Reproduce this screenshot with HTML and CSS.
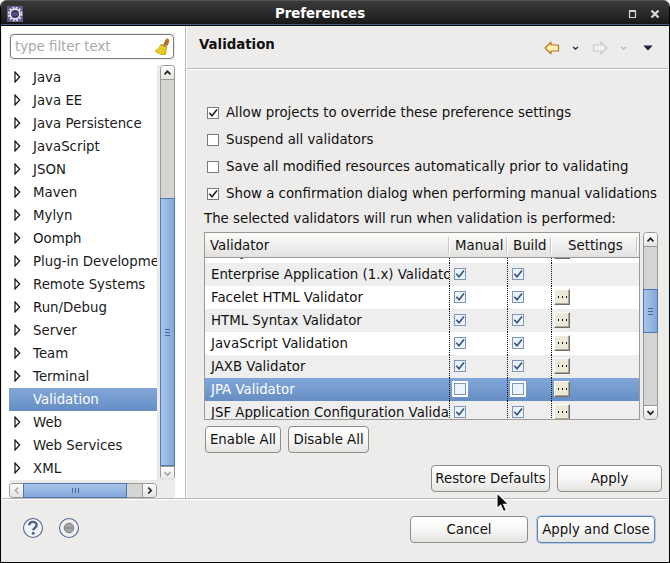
FILE: index.html
```html
<!DOCTYPE html>
<html lang="en">
<head>
<meta charset="utf-8">
<title>Preferences</title>
<link rel="stylesheet" href="styles.css">
</head>
<body>
<svg class="defs" width="0" height="0">
  <symbol id="up" viewBox="0 0 13 13"><path d="M3.5 8.3 6.5 5.3l3 3" fill="none" stroke="currentColor" stroke-width="1.7"/></symbol>
  <symbol id="down" viewBox="0 0 13 13"><path d="M3.5 5.2 6.5 8.2l3-3" fill="none" stroke="currentColor" stroke-width="1.7"/></symbol>
  <symbol id="left" viewBox="0 0 13 13"><path d="M8.3 3.5 5.3 6.5l3 3" fill="none" stroke="currentColor" stroke-width="1.7"/></symbol>
  <symbol id="right" viewBox="0 0 13 13"><path d="M5.2 3.5l3 3-3 3" fill="none" stroke="currentColor" stroke-width="1.7"/></symbol>
  <symbol id="tri" viewBox="0 0 7 12"><path d="M1 1v10L5.7 6z" fill="#fff" stroke="#111" stroke-width="1.2"/></symbol>
  <symbol id="check" viewBox="0 0 10 10"><path d="M1.300 4.800 4 7.800 9 1.600" fill="none" stroke="currentColor" stroke-width="1.600"/></symbol>
  <symbol id="arrow" viewBox="0 0 16 14"><path d="M1 7 7 1.2V4h7.5v6H7v2.8z" stroke-width="1.2" stroke-linejoin="round"/></symbol>
</svg>
<div class="window">
  <header class="titlebar">
    <svg class="logo" width="16" height="16" viewBox="0 0 16 16"><rect width="16" height="16" fill="#66558f"/><circle cx="8" cy="8" r="6.500" fill="none" stroke="#e8e6ea" stroke-width="1.800" stroke-dasharray="1.9 1.500"/><circle cx="8" cy="8" r="4.900" fill="#3b3263" stroke="#e8e6ea" stroke-width="1.600"/><path d="M4.500 7.200h7M4.500 9h7" stroke="#6a64a0"/></svg>
    <h1>Preferences</h1>
    <svg class="winbtns" width="32" height="10" viewBox="0 0 32 10"><path d="M1.500 2.500h6v6h-6z" fill="none" stroke="#d2d2d2" stroke-width="1.200"/><path d="M1 2h7" stroke="#d2d2d2" stroke-width="2"/><path d="M23.500 1.500l7 7M30.500 1.500l-7 7" stroke="#d8d8d8" stroke-width="2.300"/></svg>
  </header>
  <div class="main">
    <aside class="side">
      <div class="filterwrap"><div class="filter"><span>type filter text</span>
        <svg width="16" height="18" viewBox="0 0 16 18"><path d="M9.500 7 12 1.500q2-1.500 2.800.5T12.500 8z" fill="#c88728" stroke="#9a5a12" stroke-width=".7"/><path d="M12 3l2 1M11 5l2 1" stroke="#704010" stroke-width=".8"/><path d="M7 6.500 12.500 9.500 11.500 16.500Q6 17.500 1 13 5 11.500 7 6.500z" fill="#f0d82c" stroke="#b7950c" stroke-width=".8"/><path d="M8 9 4 14M9.500 10 7 15.500M11 10.500 10 16" stroke="#c9ac18" stroke-width=".8"/><path d="m7 6.500 5.500 3" stroke="#c77a20" stroke-width="1"/></svg>
      </div></div>
      <div class="treegrid">
        <ul class="tree">
          <li><svg><use href="#tri"/></svg>Java</li>
          <li><svg><use href="#tri"/></svg>Java EE</li>
          <li><svg><use href="#tri"/></svg>Java Persistence</li>
          <li><svg><use href="#tri"/></svg>JavaScript</li>
          <li><svg><use href="#tri"/></svg>JSON</li>
          <li><svg><use href="#tri"/></svg>Maven</li>
          <li><svg><use href="#tri"/></svg>Mylyn</li>
          <li><svg><use href="#tri"/></svg>Oomph</li>
          <li><svg><use href="#tri"/></svg>Plug-in Development</li>
          <li><svg><use href="#tri"/></svg>Remote Systems</li>
          <li><svg><use href="#tri"/></svg>Run/Debug</li>
          <li><svg><use href="#tri"/></svg>Server</li>
          <li><svg><use href="#tri"/></svg>Team</li>
          <li><svg><use href="#tri"/></svg>Terminal</li>
          <li class="selected"><svg></svg>Validation</li>
          <li><svg><use href="#tri"/></svg>Web</li>
          <li><svg><use href="#tri"/></svg>Web Services</li>
          <li><svg><use href="#tri"/></svg>XML</li>
        </ul>
        <div class="vbar tree-vbar"><span class="cap top"><svg><use href="#up"/></svg></span><span class="thumb"><i class="grip"></i></span><span class="cap bottom dim"><svg><use href="#down"/></svg></span></div>
        <div class="hbar"><span class="cap first dim"><svg><use href="#left"/></svg></span><span class="thumb"><i class="grip"></i></span><span class="cap last"><svg><use href="#right"/></svg></span></div>
      </div>
    </aside>
    <section class="page">
      <div class="pagehead">
        <h2>Validation</h2>
        <nav class="nav">
          <svg class="back" width="16" height="14"><use href="#arrow"/></svg>
          <svg class="mini" width="7" height="5" viewBox="0 0 7 5"><path d="M1 1l2.500 2L6 1" fill="none" stroke="#333" stroke-width="1.500"/></svg>
          <svg class="fwd" width="16" height="14"><use href="#arrow"/></svg>
          <svg class="mini2" width="7" height="5" viewBox="0 0 7 5"><path d="M1 1l2.500 2L6 1" fill="none" stroke="#bbb" stroke-width="1.500"/></svg>
          <svg class="menu" width="10" height="6" viewBox="0 0 10 6"><path d="M.3.500h9.400L5 5.500z" fill="#231f3c"/></svg>
        </nav>
      </div>
      <div class="content">
        <div class="options">
          <label><b class="box"><svg><use href="#check"/></svg></b>Allow projects to override these preference settings</label>
          <label><b class="box"></b>Suspend all validators</label>
          <label><b class="box"></b>Save all modified resources automatically prior to validating</label>
          <label><b class="box"><svg><use href="#check"/></svg></b>Show a confirmation dialog when performing manual validations</label>
        </div>
        <p class="caption">The selected validators will run when validation is performed:</p>
        <div class="tablewrap">
          <div class="table">
            <div class="thead"><span class="c1">Validator</span><span>Manual</span><span>Build</span><span class="c4">Settings</span></div>
            <div class="tbody">
              <div class="row part"><span class="name">EL Syntax Validator</span><span><b class="tick"></b></span><span><b class="tick"></b></span><span><b class="dots"><i></i></b></span></div>
              <div class="row odd"><span class="name">Enterprise Application (1.x) Validator</span><span><b class="tick"><svg><use href="#check"/></svg></b></span><span><b class="tick"><svg><use href="#check"/></svg></b></span><span></span></div>
              <div class="row"><span class="name">Facelet HTML Validator</span><span><b class="tick"><svg><use href="#check"/></svg></b></span><span><b class="tick"><svg><use href="#check"/></svg></b></span><span><b class="dots"><i></i></b></span></div>
              <div class="row odd"><span class="name">HTML Syntax Validator</span><span><b class="tick"><svg><use href="#check"/></svg></b></span><span><b class="tick"><svg><use href="#check"/></svg></b></span><span><b class="dots"><i></i></b></span></div>
              <div class="row"><span class="name">JavaScript Validation</span><span><b class="tick"><svg><use href="#check"/></svg></b></span><span><b class="tick"><svg><use href="#check"/></svg></b></span><span><b class="dots"><i></i></b></span></div>
              <div class="row odd"><span class="name">JAXB Validator</span><span><b class="tick"><svg><use href="#check"/></svg></b></span><span><b class="tick"><svg><use href="#check"/></svg></b></span><span><b class="dots"><i></i></b></span></div>
              <div class="row selected"><span class="name">JPA Validator</span><span><b class="tick off"></b></span><span><b class="tick off"></b></span><span><b class="dots"><i></i></b></span></div>
              <div class="row odd"><span class="name">JSF Application Configuration Validator</span><span><b class="tick"><svg><use href="#check"/></svg></b></span><span><b class="tick"><svg><use href="#check"/></svg></b></span><span><b class="dots"><i></i></b></span></div>
            </div>
          </div>
          <div class="vbar table-vbar"><span class="cap top"><svg><use href="#up"/></svg></span><span class="thumb"><i class="grip"></i></span><span class="cap bottom"><svg><use href="#down"/></svg></span></div>
        </div>
        <div class="bulk"><button class="w76">Enable All</button><button class="w81">Disable All</button></div>
        <div class="apply"><button class="w119">Restore Defaults</button><button class="w105">Apply</button></div>
      </div>
    </section>
  </div>
  <footer class="foot">
    <svg width="22" height="22" viewBox="0 0 22 22"><circle cx="11" cy="11" r="9.500" fill="#f4f5f7" stroke="#51688f" stroke-width="1.100"/><path d="M7.300 8.300C7.300 3.800 14.700 3.900 14.700 8c0 2.700-3.500 2.700-3.500 5.300" fill="none" stroke="#4b628c" stroke-width="2.400"/><circle cx="11.200" cy="16.300" r="1.500" fill="#4b628c"/></svg>
    <svg width="22" height="22" viewBox="0 0 22 22"><circle cx="11" cy="11" r="9.500" fill="#f1f1f1" stroke="#51688f" stroke-width="1.100"/><circle cx="11" cy="11" r="4.800" fill="#a5a5a5" stroke="#7e7e7e"/><path d="M7 11h8" stroke="#8f8f8f" stroke-width="1.500"/></svg>
    <div class="footbtns"><button class="w118">Cancel</button><button class="w118 default">Apply and Close</button></div>
  </footer>
  <svg class="cursor" width="14" height="22" viewBox="0 0 14 22"><path d="M1 1v15.500l3.700-3.300 2.800 6.300 2.800-1.300-2.700-6H12.500z" fill="#0c0c0c" stroke="#fff" stroke-width="1.100"/></svg>
</div>
</body>
</html>
```
FILE: styles.css
```css
* { box-sizing: border-box; }
body { margin: 0; background: #fff; overflow: hidden; font: 13.33px/17px "DejaVu Sans", sans-serif; color: #1a1a1a; }
h1, h2, p, ul { margin: 0; padding: 0; }
svg { display: block; flex: none; }
.defs { position: absolute; }
.window { position: relative; width: 670px; height: 563px; background: #edeceb; border: 1px solid #000; border-width: 0 1px 1px; border-radius: 7px 7px 0 0; overflow: hidden; display: flex; flex-direction: column; }

.titlebar { height: 26px; flex: none; display: flex; align-items: center; padding: 2px 9px 0 6px; background: linear-gradient(#3a3a3a, #2e2e2e 35%, #282828 60%, #141414); border-top: 1px solid #555; border-bottom: 1px solid #000; box-shadow: inset 0 -1px #41608a; }
.titlebar h1 { flex: 1; text-align: center; padding: 0 11px 2px 0; font-size: 13.33px; color: #fff; }

.main { height: 472px; flex: none; display: flex; margin: 0 1px; }
.side { width: 184px; flex: none; background: #fff; border-right: 1px solid #b9b8b6; padding: 7px 0 0 7px; }
.filterwrap { width: 166px; background: #edeceb; padding: 1px; }
.filter { height: 25px; border: 1px solid #7d7b79; border-radius: 4px; background: #fff; display: flex; align-items: center; justify-content: space-between; padding: 0 3px 0 4px; color: #aaa8a5; }
.treegrid { display: grid; grid-template: 415px 18px / 148px 18px; margin-top: 5px; background: #edeceb; width: 166px; }
.tree { list-style: none; background: #fff; padding-top: 1px; overflow: hidden; }
.tree li { height: 23px; display: flex; align-items: center; white-space: nowrap; padding-bottom: 1px; }
.tree li svg { width: 7px; height: 12px; margin: 0 12px 0 5px; }
.selected { background: linear-gradient(#82a6d8, #668ec4); color: #fff; }

.vbar, .hbar { display: flex; background: #d5d4d2; border: 1px solid #9b9996; border-radius: 4px; }
.vbar { width: 15px; flex-direction: column; margin-left: 3px; }
.hbar { height: 15px; margin-top: 3px; }
.cap { display: grid; place-items: center; background: linear-gradient(#fff, #e4e3e1); flex: none; color: #222; }
.cap svg { width: 13px; height: 13px; }
.cap.dim { color: #aaa; }
.vbar .cap { height: 14px; }
.hbar .cap { width: 14px; }
.top { border-bottom: 1px solid #9b9996; border-radius: 3px 3px 0 0; }
.bottom { border-top: 1px solid #9b9996; border-radius: 0 0 3px 3px; margin-top: auto; }
.first { border-right: 1px solid #9b9996; border-radius: 3px 0 0 3px; }
.last { border-left: 1px solid #9b9996; border-radius: 0 3px 3px 0; margin-left: auto; }
.thumb { flex: none; display: grid; place-items: center; border: 1px solid #4f78ae; }
.vbar .thumb { margin: 0 -1px; background: linear-gradient(90deg, #a9c5ea, #82a8da); }
.hbar .thumb { margin: -1px 0 -1px -1px; width: 104px; background: linear-gradient(#a9c5ea, #82a8da); }
.tree-vbar .cap.top { margin-bottom: 118px; }
.tree-vbar .thumb { height: 268px; }
.table-vbar .cap.top { margin-bottom: 42px; }
.table-vbar .thumb { height: 44px; }
.grip { width: 5px; height: 7px; background: repeating-linear-gradient(#47699b 0 1px, transparent 1px 3px); }
.hbar .grip { width: 7px; height: 5px; background: repeating-linear-gradient(90deg, #47699b 0 1px, transparent 1px 3px); }

.page { flex: 1; border-left: 1px solid #fff; }
.pagehead { height: 43px; display: flex; justify-content: space-between; border-bottom: 1px solid #b9b8b6; padding: 10px 15px 0 12px; }
.pagehead h2 { font-size: 13.33px; line-height: 17px; color: #111; }
.nav { display: flex; align-items: center; height: 24px; }
.back { fill: #fff0b4; stroke: #b4771c; }
.fwd { fill: #f0efee; stroke: #c9c8c7; transform: scaleX(-1); }
.mini { margin: 0 13px 0 12px; }
.mini2 { margin: 0 16px 0 12px; }
.content { border-top: 1px solid #fff; padding: 29px 6px 0 17px; color: #111; }
.options { padding-left: 3px; }
.options label { display: flex; align-items: center; height: 27px; white-space: nowrap; }
.box { width: 12px; height: 12px; flex: none; border: 1px solid #7b7977; background: #fff; margin-right: 7px; color: #222; }
.box svg, .tick svg { width: 10px; height: 10px; }
.caption { height: 25px; line-height: 24px; white-space: nowrap; }
.tablewrap { display: flex; height: 188px; }
.table { width: 436px; border: 1px solid #9b9996; display: flex; flex-direction: column; }
.thead, .row { display: grid; grid-template-columns: 244px 58px 44px 88px; }
.thead { height: 25px; flex: none; background: linear-gradient(#fbfbfa, #e3e2e0); border-bottom: 1px solid #9b9996; align-items: center; }
.thead span { border-right: 1px solid #c8c7c5; height: 17px; line-height: 17px; padding-left: 6px; box-shadow: 1px 0 #fff; }
.thead .c1 { padding-left: 5px; }
.thead .c4 { padding-left: 17px; margin-right: 2px; }
.tbody { flex: 1; background: #fff; overflow: hidden; min-height: 0; }
.row { height: 23px; }
.row.part { margin-top: -18px; }
.row.odd { background: #eee; }
.row span { padding: 5px 0 0 4px; }
.row span + span { border-left: 1px dotted #111; }
.row .name { padding: 3px 0 0 6px; white-space: nowrap; overflow: hidden; }
.row span:last-child { padding: 3px 0 0 2px; }
.tick { display: block; width: 12px; height: 12px; border: 1px solid #7f96b8; background: #eaf4fc; color: #34507c; }
.tick.off { outline: 2px solid #fff; }
.dots { display: grid; place-items: center; width: 16px; height: 16px; background: #ece9d8; border: 1px solid; border-color: #fff #716f64 #716f64 #fff; box-shadow: inset -1px -1px #aca899; }
.dots i { width: 9px; height: 2px; background: repeating-linear-gradient(90deg, #111 0 1px, transparent 1px 4px); }
.bulk { display: flex; gap: 7px; padding: 6px 0 0 1px; }
.apply { display: flex; gap: 7px; justify-content: flex-end; padding-top: 12px; }
button { height: 27px; font: inherit; color: #111; padding: 0; border: 1px solid #8f8d8a; border-radius: 4px; background: linear-gradient(#fff, #f7f7f6 50%, #e4e3e2); white-space: nowrap; }
.w76 { width: 76px; } .w81 { width: 81px; } .w119 { width: 119px; } .w105 { width: 105px; } .w118 { width: 118px; }
.foot { flex: 1; display: flex; align-items: center; gap: 14px; border-top: 1px solid #b9b8b6; box-shadow: inset 0 1px #fff; padding: 0 13px 5px 20px; margin: 0 1px; }
.footbtns { margin: 2px 0 0 auto; display: flex; gap: 9px; }
.default { border-color: #5a80b5; box-shadow: 0 0 0 1px #b8cbe5; }
.cursor { position: absolute; left: 495px; top: 492px; }
```
